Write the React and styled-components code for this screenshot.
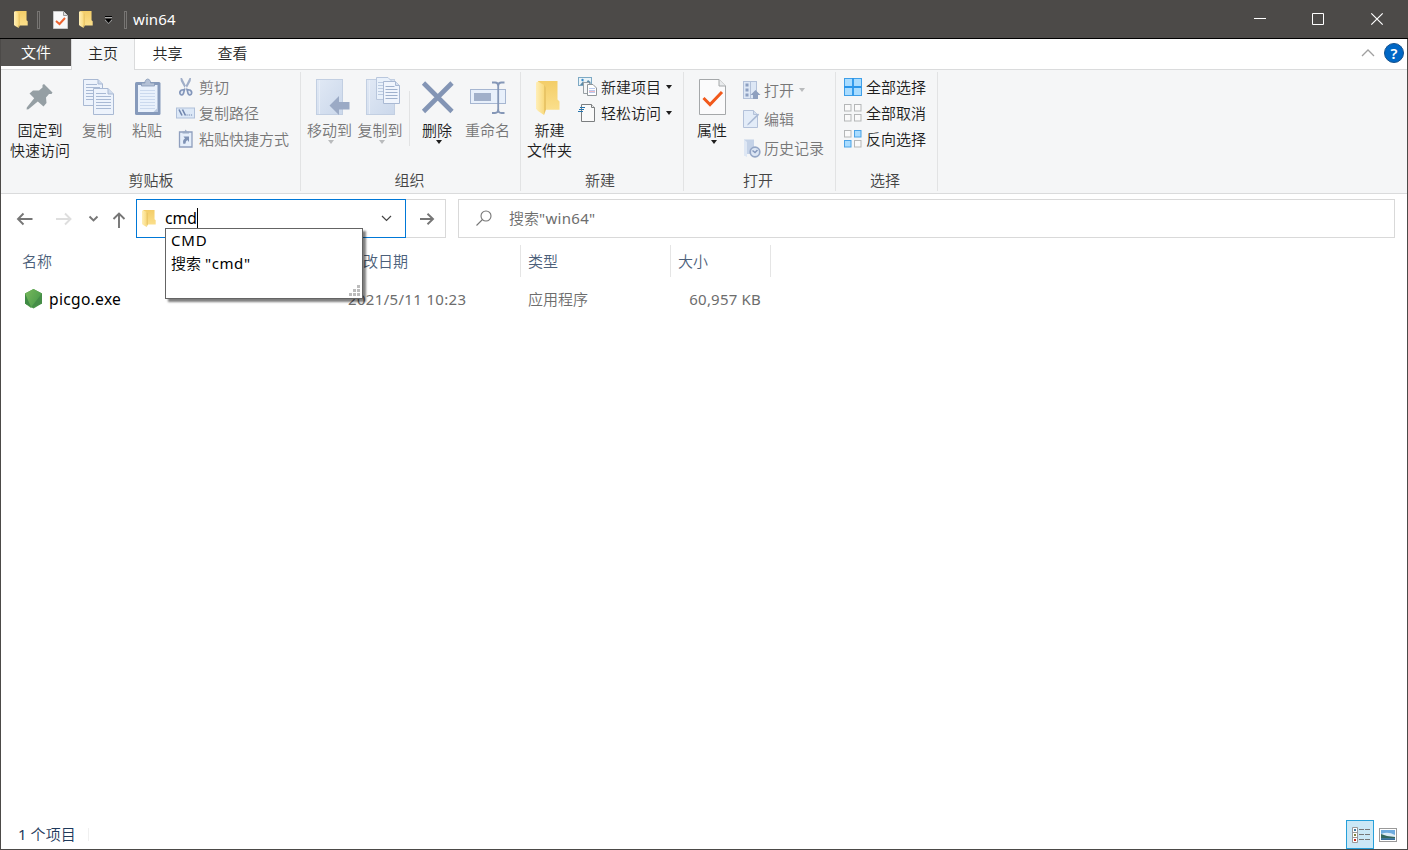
import React from 'react';
import styled, { createGlobalStyle } from 'styled-components';

const GlobalStyle = createGlobalStyle`
  * { box-sizing: border-box; }
  body { margin: 0; overflow: hidden; }
  svg { display: block; flex: none; overflow: visible; }
`;

const Window = styled.div`
  width: 1408px;
  height: 850px;
  display: flex;
  flex-direction: column;
  background: #fff;
  border: 1px solid #4c4a48;
  border-top: 0;
  font-family: 'Noto Sans', 'Noto Sans CJK SC', sans-serif;
  font-size: 15px;
  font-weight: 350;
  line-height: 20px;
  color: #000;
  white-space: nowrap;
`;

const Latin = styled.span`
  font-weight: 400;
  letter-spacing: ${(p) => p.$track || 0}px;
`;

/* ---------- title bar ---------- */
const TitleBar = styled.header`
  height: 39px;
  margin: 0 -1px;
  display: flex;
  align-items: center;
  background: #4c4a48;
  border-bottom: 1px solid #000;
  color: #fff;
  padding-left: 14px;
  flex: none;
`;
const Divider = styled.span`
  width: 3px;
  height: 18px;
  border: 1px solid #777573;
  margin: 1px ${(p) => p.$right}px 0 ${(p) => p.$left}px;
  flex: none;
`;
const QuickItem = styled.span`
  display: flex;
  padding-top: 1px;
  margin-right: ${(p) => p.$gap || 0}px;
`;
const WindowButtons = styled.div`
  margin-left: auto;
  padding-right: 2px;
  display: flex;
`;
const WindowButton = styled.button`
  width: 58.5px;
  height: 38px;
  padding: 0;
  border: 0;
  background: none;
  display: flex;
  align-items: center;
  justify-content: center;
`;

/* ---------- tabs ---------- */
const Tabs = styled.nav`
  height: 31px;
  display: flex;
  border-bottom: 1px solid #dadbdc;
  flex: none;
`;
const Tab = styled.div`
  width: ${(p) => p.$w || 65}px;
  height: ${(p) => (p.$file ? 27 : 31)}px;
  padding-top: ${(p) => (p.$file ? 3 : 4)}px;
  text-align: center;
  color: ${(p) => (p.$file ? '#fff' : '#262626')};
  background: ${(p) => (p.$file ? '#565452' : p.$active ? '#f5f6f7' : 'transparent')};
  border: 0 solid #dadbdc;
  border-width: ${(p) => (p.$active ? '0 1px' : '0')};
`;
const TabTools = styled.div`
  margin-left: auto;
  display: flex;
  align-items: center;
  gap: 9px;
  padding: 0 3px 3px 0;
`;
const Help = styled.span`
  width: 20px;
  height: 20px;
  border-radius: 50%;
  background: #0067c5;
  border: 1px solid #15518d;
  color: #fff;
  font-size: 15px;
  font-weight: 600;
  line-height: 18px;
  text-align: center;
`;

/* ---------- ribbon ---------- */
const Ribbon = styled.section`
  height: 124px;
  display: flex;
  background: #f5f6f7;
  border-bottom: 1px solid #dadbdc;
  flex: none;
`;
const Group = styled.div`
  width: ${(p) => p.$w}px;
  padding-top: 4px;
  display: flex;
  flex-direction: column;
  background: linear-gradient(#e2e3e4, #e2e3e4) right 2px / 1px 119px no-repeat;
`;
const GroupBody = styled.div`
  display: flex;
  height: 96px;
  padding-left: ${(p) => p.$pad}px;
`;
const GroupLabel = styled.div`
  text-align: center;
  color: #444;
  padding-right: ${(p) => p.$shift || 0}px;
`;
const LargeButton = styled.div`
  width: ${(p) => p.$w}px;
  display: flex;
  flex-direction: column;
  align-items: center;
  color: ${(p) => (p.$off ? '#777' : '#1e1e1e')};
  text-align: center;
  white-space: pre;
`;
const SmallColumn = styled.div`
  margin-left: ${(p) => p.$left || 0}px;
  padding-top: ${(p) => p.$top || 0}px;
`;
const SmallButton = styled.div`
  height: ${(p) => p.$h || 26}px;
  padding-left: 3px;
  display: flex;
  align-items: center;
  gap: 2px;
  color: ${(p) => (p.$off ? '#777' : '#1e1e1e')};
`;
const RibbonRule = styled.span`
  width: 1px;
  height: 55px;
  margin: 17px 0 0 2px;
  background: #e2e3e4;
`;
const Caret = styled.span`
  width: 0;
  height: 0;
  border: 3.5px solid transparent;
  border-top: 4px solid ${(p) => (p.$off ? '#b9bbbd' : '#1e1e1e')};
  border-bottom: 0;
  margin: 0 0 0 3px;
`;

/* ---------- navigation ---------- */
const NavRow = styled.div`
  height: 51px;
  padding: 5px 12px 0 14px;
  display: flex;
  flex: none;
`;
const NavIcons = styled.div`
  width: 121px;
  height: 39px;
`;
const Address = styled.div`
  width: 270px;
  height: 39px;
  border: 1px solid #0078d7;
  display: flex;
  align-items: center;
  padding: 0 13px 0 5px;
  position: relative;
`;
const Typed = styled.span`
  margin-left: 9px;
  padding-bottom: 1px;
  font-size: 15.7px;
  font-weight: 400;
  border-right: 1px solid #000;
`;
const Push = styled.span`
  margin-left: auto;
`;
const GoButton = styled.div`
  width: 40px;
  height: 39px;
  border: 1px solid #d9d9d9;
  border-left: 0;
  padding-left: 2px;
  display: flex;
  align-items: center;
  justify-content: center;
`;
const Search = styled.div`
  flex: 1;
  height: 39px;
  margin-left: 12px;
  border: 1px solid #d9d9d9;
  display: flex;
  align-items: center;
  padding: 0 0 2px 17px;
  gap: 16px;
  color: #6d6d6d;
`;
const Suggestions = styled.div`
  position: absolute;
  z-index: 2;
  left: 28px;
  top: 28px;
  width: 198px;
  height: 71px;
  background: #fff;
  border: 1px solid #646464;
  box-shadow: 3px 3px 2px rgba(0, 0, 0, 0.5);
  padding: 0 5px;
  line-height: 23px;
`;
const Grip = styled.svg`
  position: absolute;
  right: 2px;
  bottom: 2px;
`;

/* ---------- file list ---------- */
const List = styled.main`
  flex: 1;
`;
const HeaderRow = styled.div`
  display: flex;
  height: 32px;
`;
const HeaderCell = styled.div`
  width: ${(p) => p.$w}px;
  padding: 6px 0 0 ${(p) => p.$pad || 7}px;
  color: #4c607a;
  border-right: 1px solid #e5e5e5;
`;
const FileRow = styled.div`
  display: flex;
  height: 30px;
  margin-top: 7px;
  align-items: center;
`;
const FileCell = styled.div`
  width: ${(p) => p.$w}px;
  padding-left: ${(p) => (p.$right ? 0 : 7)}px;
  padding-right: ${(p) => (p.$right ? 10 : 0)}px;
  text-align: ${(p) => (p.$right ? 'right' : 'left')};
  color: #6d6d6d;
`;
const FileName = styled.div`
  width: 340px;
  padding-left: 23px;
  display: flex;
  align-items: center;
  gap: 6px;
  font-size: 15.6px;
`;

/* ---------- status bar ---------- */
const StatusBar = styled.footer`
  height: 29px;
  display: flex;
  padding-left: 17px;
  color: #1e395b;
  flex: none;
`;
const Count = styled.span`
  padding: 4px 13px 0 0;
  height: 29px;
  letter-spacing: 0.1px;
  background: linear-gradient(#f0f0f0, #f0f0f0) right 8px / 1px 13px no-repeat;
`;
const ViewButtons = styled.div`
  margin-left: auto;
  padding-right: 5px;
  display: flex;
`;
const ViewButton = styled.span`
  width: 28px;
  height: 29px;
  display: flex;
  align-items: center;
  justify-content: center;
  padding-left: ${(p) => (p.$active ? 2 : 0)}px;
  border: 1px solid ${(p) => (p.$active ? '#26a0da' : 'transparent')};
  background: ${(p) => (p.$active ? '#cbe8f6' : 'transparent')};
`;

/* ---------- icons ---------- */
const Folder = ({ w = 13, h = 17 }) => (
  <svg width={w} height={h} viewBox="0 0 24 33" preserveAspectRatio="none">
    <defs>
      <linearGradient id="fold" x1="0" x2="1"><stop offset="0" stopColor="#ffefb8" /><stop offset="1" stopColor="#f9da7e" /></linearGradient>
      <linearGradient id="foldBack" x1="0" x2="0" y2="1"><stop stopColor="#f3cd68" /><stop offset="1" stopColor="#fbdf8b" /></linearGradient>
    </defs>
    <path d="M2 0H21.500V18L23.500 20V28H5Z" fill="url(#foldBack)" />
    <path d="M0 1.500L2 .5L8 4V33L2 29L0 27Z" fill="url(#fold)" />
    <path d="M8 4V33L10 28V6Z" fill="#e9c566" />
  </svg>
);

const Large = ({ children }) => <svg width="46" height="46" viewBox="0 0 46 46">{children}</svg>;
const Small = ({ children }) => <svg width="20" height="20" viewBox="0 0 20 20">{children}</svg>;

const Lines = ({ x, y, w, n, step = 3, c = '#a8b9d4' }) =>
  Array.from({ length: n }, (_, i) => <path key={i} d={`M${x} ${y + i * step}h${w}`} stroke={c} />);

const PinIcon = () => (
  <Large>
    <path d="M27 10L35.500 18.500L34.500 20H32L29 23.500L29.500 29L26.500 32.500L20.800 27.500L11.500 35.300L9.600 35.500L9.800 33.400L17.200 24.200L12.500 19.500L16 16.500H22L25.500 13.500V11Z" fill="#959fa4" />
  </Large>
);
const CopyIcon = () => (
  <Large>
    <path d="M9.500 5.500H24L28.500 10V31.500H9.500Z" fill="#edf3fc" stroke="#a9b9d3" />
    <path d="M24 5.500V10H28.500" fill="#cfdbed" stroke="#a9b9d3" />
    <Lines x={12} y={10.5} w={11} n={1} /><Lines x={12} y={13.5} w={14} n={5} />
    <path d="M19.500 14.500H34L39.500 20V40.500H19.500Z" fill="#edf3fc" stroke="#a9b9d3" />
    <path d="M34 14.500V20H39.500" fill="#cfdbed" stroke="#a9b9d3" />
    <Lines x={22} y={19.5} w={10} n={1} /><Lines x={22} y={22.5} w={15} n={5} />
  </Large>
);
const PasteIcon = () => (
  <Large>
    <rect x="11" y="8" width="25.500" height="33" rx="1.500" fill="#869abb" />
    <path d="M14 11H33.500V38H14Z" fill="#e9f1fc" />
    <path d="M33.500 34V38H29.500Z" fill="#b9c8df" />
    <Lines x={16} y={16.5} w={15} n={7} c="#cbd9ee" />
    <path d="M17.500 12V9H21V7.500Q22 5 23.700 5Q25.500 5 26.500 7.500V9H30.500V12Z" fill="#b4c1d6" stroke="#8799b7" strokeWidth=".8" />
  </Large>
);
const MoveIcon = () => (
  <Large>
    <defs><linearGradient id="book" x2="1" y2="1"><stop stopColor="#e1e9f5" /><stop offset="1" stopColor="#cbd8eb" /></linearGradient></defs>
    <rect x="9.500" y="5.500" width="26" height="35" fill="url(#book)" stroke="#c2cfe2" />
    <path d="M12.500 6V40" stroke="#e7eef8" />
    <path d="M22.500 31.500L32 22V28H42.500V35.500H32V41Z" fill="#9baac5" />
  </Large>
);
const CopyToIcon = () => (
  <Large>
    <rect x="9.500" y="5.500" width="28" height="35" fill="url(#book)" stroke="#c2cfe2" />
    <path d="M12.500 6V40" stroke="#e7eef8" />
    <path d="M19.500 3.500H31L35.500 8V25.500H19.500Z" fill="#e9f1fb" stroke="#b9c7dd" />
    <Lines x={21} y={8.5} w={9} n={5} c="#bccbe1" />
    <path d="M26.500 7.500H38.500L42.500 11.500V29.500H26.500Z" fill="#f0f5fd" stroke="#a9b9d3" />
    <path d="M38.500 7.500V11.500H42.500" fill="#d5e0f0" stroke="#a9b9d3" />
    <Lines x={28.5} y={12.5} w={9} n={1} c="#9fb1cd" /><Lines x={28.5} y={15.5} w={12} n={4} c="#9fb1cd" />
  </Large>
);
const DeleteIcon = () => (
  <Large><path d="M9.500 9L38 37.500M38 9L9.500 37.500" stroke="#8395b5" strokeWidth="4.600" /></Large>
);
const RenameIcon = () => (
  <Large>
    <rect x="5.500" y="15.500" width="35" height="14" fill="#e8f0fb" stroke="#a6b6d1" />
    <rect x="9" y="19" width="17" height="8" fill="#a1b0ca" />
    <path d="M33.200 11.500V36" stroke="#8597b7" strokeWidth="1.800" />
    <path d="M27 8.500H30Q33.200 8.500 33.200 12Q33.200 8.500 36.500 8.500H39.500M27 39H30Q33.200 39 33.200 35.500Q33.200 39 36.500 39H39.500" fill="none" stroke="#8597b7" strokeWidth="1.800" />
  </Large>
);
const NewFolderIcon = () => (
  <Large><g transform="translate(9 7)"><Folder w={24} h={34} /></g></Large>
);
const PropertiesIcon = () => (
  <Large>
    <path d="M10.500 5.500H30L36.500 12V40.500H10.500Z" fill="#fbfbfc" stroke="#a5a8aa" />
    <path d="M30 5.500V12H36.500" fill="#e9ebed" stroke="#a5a8aa" />
    <path d="M14.500 24L21 30.500L33 18" fill="none" stroke="#f1591c" strokeWidth="3" />
  </Large>
);
const CutIcon = () => (
  <Small>
    <path d="M3.500 1L5 1L10.500 12L8.500 12.500L3.800 4ZM14 1L12.500 1L7 12L9 12.500L13.700 4Z" fill="#a0aec8" />
    <path d="M7.500 12.500L6.500 16.500Q5 19 3.300 17.300Q2 15 4 13.300ZM10 12.500L11 16.500Q12.500 19 14.200 17.300Q15.500 15 13.500 13.300Z" fill="#e3eaf5" stroke="#8396ba" strokeWidth="1.600" />
  </Small>
);
const PathIcon = () => (
  <Small>
    <rect x="-.5" y="5" width="18" height="10" fill="#dce8f7" stroke="#b0c0da" />
    <path d="M2 6.500L5 12.500M5.500 6.500L8.500 12.500" stroke="#7186ae" strokeWidth="1.600" />
    <path d="M9.500 12H16" stroke="#7186ae" strokeDasharray="1.200 1" />
  </Small>
);
const ShortcutIcon = () => (
  <Small>
    <path d="M2.500 3H15V18H2.500Z" fill="#e5eefa" stroke="#8f9fbe" strokeWidth="1.300" />
    <path d="M5.500 4.500V2.500H7.500L8.700 .5L10 2.500H12V4.500Z" fill="#9babc5" />
    <path d="M6.500 15Q5 11 8 9.500L6.500 7.500H12V13L10.300 11Q8.500 12 8.500 14.500Z" fill="#7e92b5" />
  </Small>
);
const NewItemIcon = () => (
  <Small>
    <rect x="-.5" y=".5" width="13" height="8" fill="#e9f3f8" stroke="#7da9c4" />
    <path d="M1 8L4 4.500L7 6L9 3L11.500 5V8Z" fill="#5b89a5" /><circle cx="3.500" cy="3" r="1.200" fill="#3a8cc8" />
    <path d="M4.500 5.500H9.500L12.500 8V16.500H4.500Z" fill="#f4f6f7" stroke="#98a0a5" />
    <path d="M8.500 7.500H14L17.500 11V18.500H8.500Z" fill="#fff" stroke="#8f969a" />
    <Lines x={10} y={11.5} w={6} n={3} step={2} c="#b9c9ee" />
    <path d="M10 14.500H16" stroke="#f1b8c0" />
  </Small>
);
const EasyIcon = () => (
  <Small>
    <path d="M2.500 1.500H12.500L15.500 4.500V18.500H2.500Z" fill="#fafafa" stroke="#7b7e80" />
    <path d="M12.500 1.500V4.500H15.500" fill="#eee" stroke="#7b7e80" />
    <path d="M1 4.500H6M0 6.500H5M-1 8.500H4" stroke="#2674ad" />
  </Small>
);
const OpenIcon = () => (
  <Small>
    <rect x="1.500" y="1.500" width="13" height="17" fill="#dde7f5" stroke="#b3c1d9" />
    <path d="M3.500 3.500H6.500V6.500H3.500ZM3.500 8.500H6.500V11.500H3.500ZM3.500 13.500H6.500V16.500H3.500Z" fill="#8da0c2" />
    <path d="M8.500 2V18" stroke="#b3c1d9" />
    <path d="M13.500 10L18.500 15H16V19H11V15H8.500Z" fill="#8fa0bf" />
  </Small>
);
const EditIcon = () => (
  <Small>
    <path d="M1.500 1.500H11.500L15.500 5.500V18.500H1.500Z" fill="#e3ecf8" stroke="#b3c1d9" />
    <path d="M11.500 1.500V5.500H15.500" fill="#d2deee" stroke="#b3c1d9" />
    <path d="M5 16.500L6 14.500L16 4.500L17.200 5.700L7 15.500Z" fill="#a9b9d4" />
  </Small>
);
const HistoryIcon = () => (
  <Small>
    <path d="M2 1.500H12V11L9 16H5L2 17.500Z" fill="#c4d2e7" />
    <path d="M2 1.500L5 4V19L2 17.500Z" fill="#dee7f4" />
    <circle cx="13" cy="14" r="4.800" fill="#dce6f4" stroke="#94a6c6" strokeWidth="1.700" />
    <path d="M10.500 12.500L13 14.500L15.500 12" fill="none" stroke="#8498bd" strokeWidth="1.500" />
  </Small>
);
const GridIcon = ({ on = [] }) => (
  <Small>
    {[[0.5, 1.5], [10.5, 1.5], [0.5, 11.5], [10.5, 11.5]].map(([x, y], i) => (
      <rect key={i} x={x} y={y} width="6.500" height="6.500" fill={on.includes(i) ? '#a9dcff' : '#fafafa'} stroke={on.includes(i) ? '#4ba3e6' : '#b5b7b8'} />
    ))}
  </Small>
);
const AllIcon = () => (
  <Small>
    <rect x=".500" y="1.500" width="17" height="17" fill="#a9dcff" stroke="#3f9fe8" />
    <path d="M9 1V18.500M0 10H17.500" stroke="#2995ea" strokeWidth="1.800" />
  </Small>
);

const Big = ({ icon, label, w, off, caret }) => (
  <LargeButton $w={w} $off={off}>
    {icon}
    <span>{label}</span>
    {caret && <Caret $off={off} />}
  </LargeButton>
);
const Item = ({ icon, label, off, h, caret }) => (
  <SmallButton $off={off} $h={h}>
    {icon}
    <span>{label}</span>
    {caret && <Caret $off={off} />}
  </SmallButton>
);

export default function App() {
  return (
    <Window>
      <GlobalStyle />
      <TitleBar>
        <QuickItem><Folder w={14} /></QuickItem>
        <Divider $left={9} $right={13} />
        <QuickItem $gap={11}>
          <svg width="15" height="18" viewBox="0 0 15 18">
            <path d="M.500 .500H10.500L14.500 4.500V17.500H.500Z" fill="#f8f8f8" stroke="#c8c8c8" />
            <path d="M10.500 .500V4.500H14.500" fill="#ddd" stroke="#999" />
            <path d="M3 10L6.500 13L12 7" fill="none" stroke="#ee6430" strokeWidth="2" />
          </svg>
        </QuickItem>
        <QuickItem $gap={12}><Folder w={14} /></QuickItem>
        <QuickItem $gap={12}>
          <svg width="7" height="8" viewBox="0 0 7 8">
            <path d="M0 .500H7" stroke="#000" /><path d="M0 1.500H7" stroke="#aaa" />
            <path d="M0 3H7V4.500L3.500 8L0 4.500Z" fill="#999" /><path d="M0 3H7L3.500 7Z" fill="#000" />
          </svg>
        </QuickItem>
        <Divider $left={0} $right={6} />
        <Latin $track={0.1}>win64</Latin>
        <WindowButtons>
          <WindowButton><svg width="12" height="12"><path d="M0 5.500H12" stroke="#fff" /></svg></WindowButton>
          <WindowButton><svg width="12" height="12"><path d="M.500 .500H11.500V11.500H.500Z" fill="none" stroke="#fff" /></svg></WindowButton>
          <WindowButton><svg width="12" height="12"><path d="M.300 .300L11.700 11.700M11.700 .300L.300 11.700" stroke="#fff" strokeWidth="1.200" /></svg></WindowButton>
        </WindowButtons>
      </TitleBar>

      <Tabs>
        <Tab $file $w={70}>文件</Tab>
        <Tab $active $w={64}>主页</Tab>
        <Tab>共享</Tab>
        <Tab>查看</Tab>
        <TabTools>
          <svg width="14" height="8"><path d="M1 7L7 1L13 7" fill="none" stroke="#a0a0a0" strokeWidth="1.300" /></svg>
          <Help>?</Help>
        </TabTools>
      </Tabs>

      <Ribbon>
        <Group $w={300}>
          <GroupBody $pad={5}>
            <Big icon={<PinIcon />} label={'固定到\n快速访问'} w={68} />
            <Big icon={<CopyIcon />} label="复制" w={46} off />
            <Big icon={<PasteIcon />} label="粘贴" w={54} off />
            <SmallColumn>
              <Item icon={<CutIcon />} label="剪切" off />
              <Item icon={<PathIcon />} label="复制路径" off />
              <Item icon={<ShortcutIcon />} label="粘贴快捷方式" off />
            </SmallColumn>
          </GroupBody>
          <GroupLabel>剪贴板</GroupLabel>
        </Group>
        <Group $w={220}>
          <GroupBody $pad={5}>
            <Big icon={<MoveIcon />} label="移动到" w={47} off caret />
            <Big icon={<CopyToIcon />} label="复制到" w={54} off caret />
            <RibbonRule />
            <Big icon={<DeleteIcon />} label="删除" w={54} caret />
            <Big icon={<RenameIcon />} label="重命名" w={47} off />
          </GroupBody>
          <GroupLabel $shift={3}>组织</GroupLabel>
        </Group>
        <Group $w={163}>
          <GroupBody $pad={3}>
            <Big icon={<NewFolderIcon />} label={'新建\n文件夹'} w={51} />
            <SmallColumn $left={1}>
              <Item icon={<NewItemIcon />} label="新建项目" caret />
              <Item icon={<EasyIcon />} label="轻松访问" caret />
            </SmallColumn>
          </GroupBody>
          <GroupLabel $shift={5}>新建</GroupLabel>
        </Group>
        <Group $w={152}>
          <GroupBody $pad={5}>
            <Big icon={<PropertiesIcon />} label="属性" w={46} caret />
            <SmallColumn $left={4} $top={1}>
              <Item icon={<OpenIcon />} label="打开" h={29} off caret />
              <Item icon={<EditIcon />} label="编辑" h={29} off />
              <Item icon={<HistoryIcon />} label="历史记录" h={29} off />
            </SmallColumn>
          </GroupBody>
          <GroupLabel $shift={4}>打开</GroupLabel>
        </Group>
        <Group $w={102}>
          <GroupBody $pad={5}>
            <SmallColumn>
              <Item icon={<AllIcon />} label="全部选择" />
              <Item icon={<GridIcon />} label="全部取消" />
              <Item icon={<GridIcon on={[1, 2]} />} label="反向选择" />
            </SmallColumn>
          </GroupBody>
          <GroupLabel $shift={4}>选择</GroupLabel>
        </Group>
      </Ribbon>

      <NavRow>
        <NavIcons>
          <svg width="121" height="39" fill="none" stroke="#767676" strokeWidth="1.900">
            <path d="M17.500 20H3M8.500 14.500L3 20L8.500 25.500" />
            <path d="M41 20H55M50 14.500L55.500 20L50 25.500" stroke="#dedede" />
            <path d="M74.500 17.500L78.500 21.500L82.500 17.500" />
            <path d="M104 29V14.500M98.500 20L104 14.500L109.500 20" />
          </svg>
        </NavIcons>
        <Address>
          <Folder w={14} />
          <Typed>cmd</Typed>
          <Push><svg width="11" height="7"><path d="M1 1L5.500 5.500L10 1" fill="none" stroke="#444" strokeWidth="1.200" /></svg></Push>
          <Suggestions>
            <div><Latin $track={0.8}>CMD</Latin></div>
            <div>搜索 <Latin $track={0.6}>"cmd"</Latin></div>
            <Grip width="11" height="11" fill="#bcbcbc">
              <path d="M8 0h3v3h-3zM4 4h3v3h-3zM8 4h3v3h-3zM0 8h3v3h-3zM4 8h3v3h-3zM8 8h3v3h-3z" />
            </Grip>
          </Suggestions>
        </Address>
        <GoButton>
          <svg width="16" height="12"><path d="M1 6H14M8.500 .800L14 6L8.500 11.200" fill="none" stroke="#767676" strokeWidth="1.900" /></svg>
        </GoButton>
        <Search>
          <svg width="17" height="16" fill="none" stroke="#767676" strokeWidth="1.100"><circle cx="10" cy="6" r="5" /><path d="M6.500 9.500L.500 15.500" /></svg>
          <span>搜索<Latin $track={0.3}>"win64"</Latin></span>
        </Search>
      </NavRow>

      <List>
        <HeaderRow>
          <HeaderCell $w={340} $pad={21}>名称</HeaderCell>
          <HeaderCell $w={180}>修改日期</HeaderCell>
          <HeaderCell $w={150}>类型</HeaderCell>
          <HeaderCell $w={100}>大小</HeaderCell>
        </HeaderRow>
        <FileRow>
          <FileName>
            <svg width="19" height="20" viewBox="0 0 19 20">
              <defs><linearGradient id="hex" x2="1" y2=".6"><stop stopColor="#79b95c" /><stop offset="1" stopColor="#4a9a4b" /></linearGradient></defs>
              <path d="M9.500 0L18 4.500V14.500L9.500 19.500L1 14.500V4.500Z" fill="#4a9548" />
              <path d="M1 4.500L9.500 0L18 4.500L7 19L1 14.500Z" fill="url(#hex)" />
              <path d="M18 4.500L7 18.500L18 14.500Z" fill="#468d48" />
              <path d="M1 4.500L7 18L1 14.500Z" fill="#3f8a45" />
            </svg>
            <Latin $track={0.3}>picgo.exe</Latin>
          </FileName>
          <FileCell $w={180}><Latin $track={0.33}>2021/5/11 10:23</Latin></FileCell>
          <FileCell $w={150}>应用程序</FileCell>
          <FileCell $w={100} $right><Latin $track={0.2}>60,957 KB</Latin></FileCell>
        </FileRow>
      </List>

      <StatusBar>
        <Count><Latin>1</Latin> 个项目</Count>
        <ViewButtons>
          <ViewButton $active>
            <svg width="18" height="16" viewBox="0 0 18 16">
              <path d="M.500 .500H5.500V15.500H.500ZM.500 5.500H5.500M.500 10.500H5.500" fill="#fff" stroke="#999" />
              <path d="M2 2H4V4H2Z" fill="#3e78a0" /><path d="M2 7H4V9H2Z" fill="#82853f" /><path d="M2 12H4V14H2Z" fill="#c52d1c" />
              <path d="M7 2.500H12M13 2.500H18M7 7.500H12M13 7.500H18M7 12.500H12M13 12.500H18" stroke="#777" />
            </svg>
          </ViewButton>
          <ViewButton>
            <svg width="18" height="14" viewBox="0 0 18 14">
              <rect x=".500" y=".500" width="17" height="13" fill="#fff" stroke="#999" />
              <rect x="2" y="2" width="14" height="10" fill="#6eabdf" />
              <path d="M2 6Q9 3 16 7V9H2Z" fill="#dcecf7" /><path d="M2 6L8 8L16 9V10.500H2Z" fill="#35675d" /><path d="M2 10.500H16V12H2Z" fill="#376d9b" />
            </svg>
          </ViewButton>
        </ViewButtons>
      </StatusBar>
    </Window>
  );
}
